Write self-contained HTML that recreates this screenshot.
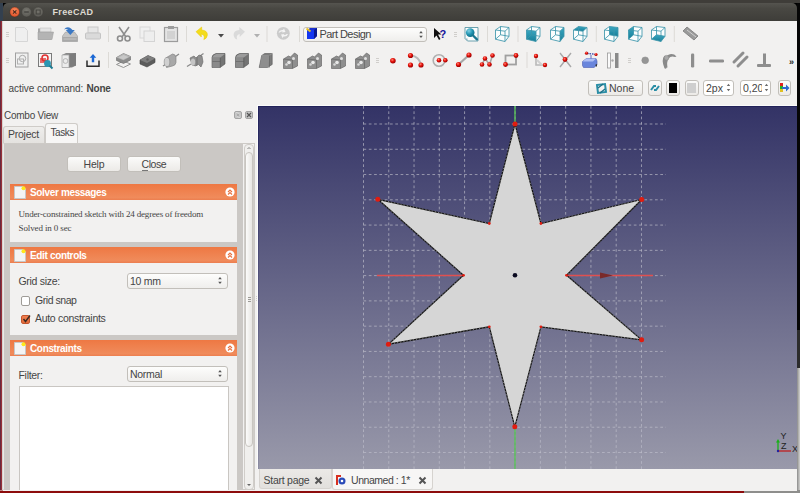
<!DOCTYPE html>
<html><head><meta charset="utf-8">
<style>
*{margin:0;padding:0;box-sizing:border-box}
html,body{width:800px;height:493px;overflow:hidden;background:#000;font-family:"Liberation Sans",sans-serif;color:#3c3c3c}
.a{position:absolute}
.t{position:absolute;white-space:nowrap;font-family:"Liberation Sans",sans-serif}
#title{left:3px;top:3px;width:794px;height:18px;background:linear-gradient(#55544f,#494843 30%,#3e3d39);border-radius:5px 5px 0 0}
.wb{position:absolute;width:11px;height:11px;border-radius:50%;top:4px}
.btn{position:absolute;border:1px solid #c2bfba;border-radius:3px;background:linear-gradient(#fbfbfa,#eceae7);}
.hdr{position:absolute;left:10px;width:227px;height:16px;background:linear-gradient(#ee7843,#f08b5b 85%,#ec7e4f)}
.hdr .tt{position:absolute;left:20px;top:3px;font:bold 10px "Liberation Sans";letter-spacing:-.35px;color:#fff;white-space:nowrap}
.body{position:absolute;left:10px;width:227px;background:#f2f1f0}
.combo{position:absolute;border:1px solid #c2bfba;border-radius:3px;background:linear-gradient(#fdfdfc,#efeeec)}
</style></head><body>
<!-- desktop edges -->
<div class="a" style="left:0;top:0;width:800px;height:3px;background:#3f3d39"></div>
<div class="a" style="left:0;top:3px;width:3px;height:18px;background:#33404f"></div>
<div class="a" style="left:0;top:21px;width:1px;height:472px;background:#682a40"></div><div class="a" style="left:1px;top:21px;width:1px;height:472px;background:#983038"></div><div class="a" style="left:2px;top:21px;width:1px;height:469px;background:#d6d4d1"></div>
<div class="a" style="left:797px;top:3px;width:3px;height:327px;background:#060606"></div>
<div class="a" style="left:797px;top:330px;width:3px;height:38px;background:#2c2c2c"></div>
<div class="a" style="left:797px;top:368px;width:3px;height:125px;background:linear-gradient(90deg,#8a8a8a,#b8b8b6 60%,#d0d0ce)"></div>
<div class="a" style="left:0;top:490px;width:744px;height:1px;background:#c08a88"></div><div class="a" style="left:0;top:491px;width:744px;height:2px;background:#8d0c0c"></div><div class="a" style="left:744px;top:490px;width:56px;height:3px;background:#8e8e8c"></div>
<!-- title -->
<div id="title" class="a">
  <svg class="a" style="left:0;top:0" width="50" height="18" viewBox="0 0 50 18">
<defs><radialGradient id="cb" cx="50%" cy="35%" r="65%"><stop offset="0" stop-color="#f98a5c"/><stop offset="1" stop-color="#df4f27"/></radialGradient>
<radialGradient id="gb" cx="50%" cy="35%" r="65%"><stop offset="0" stop-color="#77766f"/><stop offset="1" stop-color="#5a5954"/></radialGradient></defs>
<circle cx="11.7" cy="9" r="4.9" fill="url(#cb)" stroke="#3a2a22" stroke-width=".4"/>
<path d="M10 7.3l3.4 3.4M13.4 7.3l-3.4 3.4" stroke="#4a2a1e" stroke-width="1.1"/>
<circle cx="23.5" cy="9" r="4.9" fill="url(#gb)" stroke="#3c3b37" stroke-width=".4"/>
<path d="M21.2 9h4.6" stroke="#3e3d39" stroke-width="1.2"/>
<circle cx="35.2" cy="9" r="4.9" fill="url(#gb)" stroke="#3c3b37" stroke-width=".4"/>
<rect x="33.2" y="7" width="4" height="4" fill="none" stroke="#43423e" stroke-width="1"/>
</svg>
  <div class="t" style="left:49.5px;top:4px;font:bold 9px 'Liberation Sans';letter-spacing:.35px;color:#dfdbd2">FreeCAD</div>
</div>
<!-- window -->
<div class="a" style="left:3px;top:21px;width:794px;height:469.5px;background:#f2f1f0"></div>
<svg class="a" style="left:0;top:0" width="800" height="106" viewBox="0 0 800 106">
<defs><radialGradient id="rd" cx="40%" cy="35%" r="60%"><stop offset="0" stop-color="#ff8a7a"/><stop offset=".5" stop-color="#e8140c"/><stop offset="1" stop-color="#a00000"/></radialGradient><linearGradient id="cube" x1="0" y1="0" x2="0" y2="1"><stop offset="0" stop-color="#3aa7c2"/><stop offset="1" stop-color="#177f98"/></linearGradient><linearGradient id="gbox" x1="0" y1="0" x2="0" y2="1"><stop offset="0" stop-color="#8a8a8a"/><stop offset="1" stop-color="#5d5d5d"/></linearGradient></defs>
<rect x="6" y="32" width="3" height="1" fill="#d0cecb"/>
<rect x="6" y="34" width="3" height="1" fill="#d0cecb"/>
<rect x="6" y="36" width="3" height="1" fill="#d0cecb"/>
<rect x="6" y="58" width="3" height="1" fill="#d0cecb"/>
<rect x="6" y="60" width="3" height="1" fill="#d0cecb"/>
<rect x="6" y="62" width="3" height="1" fill="#d0cecb"/>
<rect x="454" y="32" width="3" height="1" fill="#d0cecb"/>
<rect x="454" y="34" width="3" height="1" fill="#d0cecb"/>
<rect x="454" y="36" width="3" height="1" fill="#d0cecb"/>
<rect x="376" y="58" width="3" height="1" fill="#d0cecb"/>
<rect x="376" y="60" width="3" height="1" fill="#d0cecb"/>
<rect x="376" y="62" width="3" height="1" fill="#d0cecb"/>
<rect x="628" y="58" width="3" height="1" fill="#d0cecb"/>
<rect x="628" y="60" width="3" height="1" fill="#d0cecb"/>
<rect x="628" y="62" width="3" height="1" fill="#d0cecb"/>
<rect x="108.0" y="26" width="1" height="16" fill="#dcdad6"/>
<rect x="186.0" y="26" width="1" height="16" fill="#dcdad6"/>
<rect x="266.5" y="26" width="1" height="16" fill="#dcdad6"/>
<rect x="299.0" y="26" width="1" height="16" fill="#dcdad6"/>
<rect x="487.0" y="26" width="1" height="16" fill="#dcdad6"/>
<rect x="517.5" y="26" width="1" height="16" fill="#dcdad6"/>
<rect x="595.8" y="26" width="1" height="16" fill="#dcdad6"/>
<rect x="673.8" y="26" width="1" height="16" fill="#dcdad6"/>
<rect x="108.0" y="52" width="1" height="16" fill="#dcdad6"/>
<rect x="526.5" y="52" width="1" height="16" fill="#dcdad6"/>
<path d="M15.5 27.5h9l3 3v11h-12z" fill="#efefef" stroke="#d6d6d6"/>
<path d="M38 28.5h5l1 1h7v10h-13z" fill="#a8a8a8"/><path d="M40 28h11v4h-11z" fill="#e4e4e4" stroke="#bbb" stroke-width=".5"/><path d="M38 32h15.5l-1.5 7.5h-14z" fill="#b4b4b4" stroke="#9a9a9a" stroke-width=".5"/>
<path d="M62.5 36l3-4h9l3 4v5.5h-15z" fill="#c4c4c4" stroke="#9a9a9a" stroke-width=".6"/><rect x="62.5" y="37" width="15" height="4.5" fill="#a8a8a8"/><path d="M63.5 39h13" stroke="#d8d8d8" stroke-width=".6"/><path d="M64 29.5q3-4 7-1l1.5 1.5h2.3l-4.5 5-4.5-5h2.3q-2-1.5-4.1-.5z" fill="#3b78c4"/>
<rect x="88" y="27" width="10" height="6" fill="#e6e6e6" stroke="#c8c8c8"/><rect x="85.5" y="33" width="15" height="6" rx="1" fill="#dadada" stroke="#c4c4c4"/>
<g stroke="#8d8d8d" stroke-width="1.6" fill="none"><path d="M119 27l7 10M129 27l-7 10"/><circle cx="120" cy="38.5" r="2.5"/><circle cx="127.5" cy="38.5" r="2.5"/></g>
<rect x="140" y="27" width="10" height="11" fill="#f0f0f0" stroke="#d8d8d8"/><rect x="144" y="31" width="10.5" height="10.5" fill="#eeeeee" stroke="#d4d4d4"/>
<rect x="164.5" y="27.5" width="13" height="14" fill="#e4e4e4" stroke="#9c9c9c" stroke-width="1.2"/><rect x="168" y="26" width="6" height="3" fill="#9c9c9c"/><rect x="167" y="31" width="8" height="8" fill="#d2d2d2"/>
<path d="M196 31.7L201.7 27V30Q207.5 30.5 207.4 35Q207 38.5 203.8 39.6Q205.5 35 201.3 34V37Z" fill="#f3dc1c" stroke="#e8c800" stroke-width=".5"/>
<path d="M218 34h6l-3 3.5z" fill="#4a4a4a"/>
<path d="M245 31.7L239.3 27V30Q233.5 30.5 233.6 35Q234 38.5 237.2 39.6Q235.5 35 239.7 34V37Z" fill="#dadada"/>
<path d="M254 34h6l-3 3.5z" fill="#b0b0b0"/>
<circle cx="283.3" cy="33.3" r="6.4" fill="#cbcbcb"/><path d="M278.5 32.5q1-3 4.5-2.5l1 -1.5 1.5 3.5-3.5.5 .8-1q-2-.3-3 1zM288 34q-1 3-4.5 2.5l-1 1.5-1.5-3.5 3.5-.5-.8 1q2 .3 3-1z" fill="#f4f4f4"/>
<path d="M434 28v10l2.5-2.5 2.5 4.5 1.5-1-2.5-4.5h3.5z" fill="#111"/><text x="439.5" y="37.5" font-family="Liberation Sans" font-weight="bold" font-size="11" fill="#14149a">?</text>
<path d="M465 27.5h13v13.5h-10.5l-2.5-2.5z" fill="#fafcfc" stroke="#5b97a6" stroke-width=".9"/><path d="M465 38.5l2.5 2.5v-2.5z" fill="#8ab4c0"/><radialGradient id="lens" cx="35%" cy="30%" r="70%"><stop offset="0" stop-color="#7fd0e4"/><stop offset=".6" stop-color="#1f93b0"/><stop offset="1" stop-color="#12708a"/></radialGradient><circle cx="470.2" cy="32.6" r="4.3" fill="url(#lens)"/><path d="M473.3 35.8l3.6 3.6" stroke="#1a7890" stroke-width="2.3" stroke-linecap="round"/>
<g transform="translate(495,26)">
<path d="M0.5 4 L5.5 .5 L14 1.5 L14 10.3 L10 15.5 L0.5 13.2Z" fill="#fbfdfd"/>
<path d="M0.5 4 L10 5.2 L10 15.5 L0.5 13.2ZM5.5 0.5 L14 1.5 L14 10.3 L5.5 8.8ZM0.5 4 L5.5 0.5M10 5.2 L14 1.5M10 15.5 L14 10.3M0.5 13.2 L5.5 8.8" fill="none" stroke="#3d96ab" stroke-width=".85" stroke-linejoin="round"/>
</g>
<g transform="translate(526,26)">
<path d="M0.5 4 L5.5 .5 L14 1.5 L14 10.3 L10 15.5 L0.5 13.2Z" fill="#fbfdfd"/>
<path d="M0.5 4 L10 5.2 L10 15.5 L0.5 13.2Z" fill="url(#cube)"/>
<path d="M0.5 4 L10 5.2 L10 15.5 L0.5 13.2ZM5.5 0.5 L14 1.5 L14 10.3 L5.5 8.8ZM0.5 4 L5.5 0.5M10 5.2 L14 1.5M10 15.5 L14 10.3M0.5 13.2 L5.5 8.8" fill="none" stroke="#3d96ab" stroke-width=".85" stroke-linejoin="round"/>
</g>
<g transform="translate(550,26)">
<path d="M0.5 4 L5.5 .5 L14 1.5 L14 10.3 L10 15.5 L0.5 13.2Z" fill="#fbfdfd"/>
<path d="M10 5.2 L14 1.5 L14 10.3 L10 15.5Z" fill="url(#cube)"/>
<path d="M0.5 4 L10 5.2 L10 15.5 L0.5 13.2ZM5.5 0.5 L14 1.5 L14 10.3 L5.5 8.8ZM0.5 4 L5.5 0.5M10 5.2 L14 1.5M10 15.5 L14 10.3M0.5 13.2 L5.5 8.8" fill="none" stroke="#3d96ab" stroke-width=".85" stroke-linejoin="round"/>
</g>
<g transform="translate(573,26)">
<path d="M0.5 4 L5.5 .5 L14 1.5 L14 10.3 L10 15.5 L0.5 13.2Z" fill="#fbfdfd"/>
<path d="M0.5 4 L5.5 0.5 L14 1.5 L10 5.2Z" fill="url(#cube)"/>
<path d="M0.5 4 L10 5.2 L10 15.5 L0.5 13.2ZM5.5 0.5 L14 1.5 L14 10.3 L5.5 8.8ZM0.5 4 L5.5 0.5M10 5.2 L14 1.5M10 15.5 L14 10.3M0.5 13.2 L5.5 8.8" fill="none" stroke="#3d96ab" stroke-width=".85" stroke-linejoin="round"/>
</g>
<g transform="translate(604,26)">
<path d="M0.5 4 L5.5 .5 L14 1.5 L14 10.3 L10 15.5 L0.5 13.2Z" fill="#fbfdfd"/>
<path d="M5.5 0.5 L14 1.5 L14 10.3 L5.5 8.8Z" fill="url(#cube)"/>
<path d="M0.5 4 L10 5.2 L10 15.5 L0.5 13.2ZM5.5 0.5 L14 1.5 L14 10.3 L5.5 8.8ZM0.5 4 L5.5 0.5M10 5.2 L14 1.5M10 15.5 L14 10.3M0.5 13.2 L5.5 8.8" fill="none" stroke="#3d96ab" stroke-width=".85" stroke-linejoin="round"/>
</g>
<g transform="translate(628,26)">
<path d="M0.5 4 L5.5 .5 L14 1.5 L14 10.3 L10 15.5 L0.5 13.2Z" fill="#fbfdfd"/>
<path d="M0.5 4 L5.5 0.5 L5.5 8.8 L0.5 13.2Z" fill="url(#cube)"/>
<path d="M0.5 4 L10 5.2 L10 15.5 L0.5 13.2ZM5.5 0.5 L14 1.5 L14 10.3 L5.5 8.8ZM0.5 4 L5.5 0.5M10 5.2 L14 1.5M10 15.5 L14 10.3M0.5 13.2 L5.5 8.8" fill="none" stroke="#3d96ab" stroke-width=".85" stroke-linejoin="round"/>
</g>
<g transform="translate(651,26)">
<path d="M0.5 4 L5.5 .5 L14 1.5 L14 10.3 L10 15.5 L0.5 13.2Z" fill="#fbfdfd"/>
<path d="M0.5 13.2 L5.5 8.8 L14 10.3 L10 15.5Z" fill="url(#cube)"/>
<path d="M0.5 4 L10 5.2 L10 15.5 L0.5 13.2ZM5.5 0.5 L14 1.5 L14 10.3 L5.5 8.8ZM0.5 4 L5.5 0.5M10 5.2 L14 1.5M10 15.5 L14 10.3M0.5 13.2 L5.5 8.8" fill="none" stroke="#3d96ab" stroke-width=".85" stroke-linejoin="round"/>
</g>
<path d="M683 31l4-4 11 9-4 4z" fill="#9a9a9a" stroke="#7a7a7a" stroke-width=".8"/><path d="M687 30l9 7" stroke="#cfcfcf" stroke-width="1"/>
<rect x="15.5" y="53" width="12.5" height="14" fill="#f0f0f0" stroke="#a0a0a0"/><circle cx="22.5" cy="58.5" r="3.2" fill="none" stroke="#a8a8a8"/><rect x="17.5" y="59" width="6" height="5" fill="none" stroke="#b0b0b0"/>
<rect x="38.5" y="53.5" width="13" height="13" fill="#f4f4f4" stroke="#7a7a7a"/><path d="M40 58h6v5h-6z" fill="#e86a6a"/><circle cx="45" cy="58" r="3" fill="none" stroke="#e03030" stroke-width="1.5"/><circle cx="47.5" cy="63.5" r="3.4" fill="#2b97b3"/><path d="M49.5 65.5l3 3" stroke="#1e7c93" stroke-width="2"/>
<path d="M62 55l4-2h10v12.5l-4 2h-10z" fill="#8a8a8a"/><path d="M69 54.5l7-1.5v12.5l-7 2z" fill="#7c7c7c"/><path d="M62 55h7v12.5h-7z" fill="#ececec" stroke="#a4a4a4" stroke-width=".7"/><circle cx="65.5" cy="61" r="2.4" fill="none" stroke="#a8a8a8" stroke-width=".8"/>
<path d="M87 60.5v5.8h12v-5.8" fill="none" stroke="#2a2a2a" stroke-width="1.5"/><path d="M93 54l-3.3 3.8h2.1v4.5h2.4v-4.5h2.1z" fill="#1c68d4"/>
<path d="M116.5 64.5l7-3.5 7 3-7 3.5z" fill="none" stroke="#8a8a8a" stroke-width=".9"/>
<path d="M116.5 57.5l7-4 7 3v3.5l-7 3.5-7-3z" fill="#8c8c8c" stroke="#6a6a6a" stroke-width=".6"/><path d="M116.5 57.5l7-4 7 3-7 3.8z" fill="#b4b4b4"/><path d="M118.5 57.5l5-2.6 4.8 2-5 2.6z" fill="#c8c8c8"/>
<path d="M140 60l8-4.5 7 3v4l-8 4.5-7-3z" fill="#5c5c5c" stroke="#454545" stroke-width=".6"/><path d="M140 60l8-4.5 7 3-8 4.5z" fill="#7e7e7e"/><circle cx="147.5" cy="59.5" r="1.2" fill="#606060"/>
<path d="M163 66l4-2.5M175.5 56.5l3.5-2.5" stroke="#8a8a8a" stroke-width="1.3"/>
<path d="M166.5 57.5l6-3.5q3 0 3.5 3.5v5q-.5 3-3.5 3.5l-6 1.5z" fill="#a8a8a8" stroke="#7a7a7a" stroke-width=".6"/><ellipse cx="167" cy="62" rx="2.8" ry="4.6" fill="#d0d0d0" stroke="#8a8a8a" stroke-width=".6"/>
<path d="M187 66.5l4-2.5M200 56l3.5-2.5" stroke="#8a8a8a" stroke-width="1.3"/>
<path d="M190 58l4-2 2 2 3-3 3 1 1 6-2 5-3-3-2 2-4-1z" fill="#8e8e8e" stroke="#666" stroke-width=".6"/><ellipse cx="193" cy="62" rx="2.2" ry="3.5" fill="#c4c4c4"/><path d="M197 57v9" stroke="#6a6a6a" stroke-width=".8"/>
<g transform="translate(211.5,53.5)"><path d="M.5 4q0-3 4-4h9v10.5l-5 3.5h-8z" fill="#747474" stroke="#505050" stroke-width=".6"/><path d="M.8 4h8v10h-8z" fill="#8a8a8a"/><path d="M.8 8h8" stroke="#6a6a6a" stroke-width=".8"/><path d="M8.8 4v10" stroke="#555" stroke-width=".7"/><path d="M.8 4q1-3 4-3.5h8.5l-4.5 3.5z" fill="#9c9c9c"/></g>
<g transform="translate(235,53.5)"><path d="M.5 4q0-3 4-4h9v10.5l-5 3.5h-8z" fill="#747474" stroke="#505050" stroke-width=".6"/><path d="M.8 4h8v10h-8z" fill="#8a8a8a"/><path d="M.8 8h8" stroke="#6a6a6a" stroke-width=".8"/><path d="M8.8 4v10" stroke="#555" stroke-width=".7"/><path d="M.8 4q1-3 4-3.5h8.5l-4.5 3.5z" fill="#9c9c9c"/></g>
<g transform="translate(259.2,53.5)"><path d="M2.5 2l3-2h7.5v11l-5 3h-8z" fill="#7c7c7c" stroke="#555" stroke-width=".6"/><path d="M2.5 2h7.5l3-2" fill="none" stroke="#999" stroke-width=".8"/><path d="M10 2v12" stroke="#5e5e5e" stroke-width=".8"/><path d="M2.5 2h7.5l-.5 12h-9z" fill="#8e8e8e"/></g>
<g transform="translate(283,53)"><path d="M.5 6l5-3 2 1 4-4 3 2v11l-5 2.5h-9z" fill="#8e8e8e" stroke="#5c5c5c" stroke-width=".6"/><path d="M.5 6l9 1v8.5" fill="none" stroke="#666" stroke-width=".7"/><circle cx="6" cy="9.5" r="1.8" fill="#e8e8e8"/><circle cx="10.5" cy="5.5" r="1.5" fill="#e0e0e0"/><circle cx="3.5" cy="11.5" r="1.3" fill="#d8d8d8"/></g>
<g transform="translate(307,53)"><path d="M.5 6l5-3 2 1 4-4 3 2v11l-5 2.5h-9z" fill="#8e8e8e" stroke="#5c5c5c" stroke-width=".6"/><path d="M.5 6l9 1v8.5" fill="none" stroke="#666" stroke-width=".7"/><circle cx="6" cy="9.5" r="1.8" fill="#e8e8e8"/><circle cx="10.5" cy="5.5" r="1.5" fill="#e0e0e0"/><circle cx="3.5" cy="11.5" r="1.3" fill="#d8d8d8"/></g>
<g transform="translate(331,53)"><path d="M.5 6l5-3 2 1 4-4 3 2v11l-5 2.5h-9z" fill="#8e8e8e" stroke="#5c5c5c" stroke-width=".6"/><path d="M.5 6l9 1v8.5" fill="none" stroke="#666" stroke-width=".7"/><circle cx="6" cy="9.5" r="1.8" fill="#e8e8e8"/><circle cx="10.5" cy="5.5" r="1.5" fill="#e0e0e0"/><circle cx="3.5" cy="11.5" r="1.3" fill="#d8d8d8"/></g>
<g transform="translate(355,53)"><path d="M.5 6l5-3 2 1 4-4 3 2v11l-5 2.5h-9z" fill="#8e8e8e" stroke="#5c5c5c" stroke-width=".6"/><path d="M.5 6l9 1v8.5" fill="none" stroke="#666" stroke-width=".7"/><circle cx="6" cy="9.5" r="1.8" fill="#e8e8e8"/><circle cx="10.5" cy="5.5" r="1.5" fill="#e0e0e0"/><circle cx="3.5" cy="11.5" r="1.3" fill="#d8d8d8"/></g>
<circle cx="392.9" cy="60.75" r="2.8" fill="url(#rd)"/>
<path d="M411 55.5q8 1 10 9" fill="none" stroke="#b8b8b8" stroke-width="2"/>
<circle cx="410.5" cy="55.5" r="2.6" fill="url(#rd)"/>
<circle cx="410.5" cy="65" r="2.6" fill="url(#rd)"/>
<circle cx="421" cy="65" r="2.6" fill="url(#rd)"/>
<circle cx="439" cy="60.5" r="5.8" fill="none" stroke="#b0b0b0" stroke-width="1.6"/>
<circle cx="439" cy="60.3" r="2.3" fill="url(#rd)"/>
<circle cx="445.3" cy="60.3" r="2.3" fill="url(#rd)"/>
<path d="M458.5 64.5L469 55" stroke="#a8a8a8" stroke-width="2.2"/>
<circle cx="458.5" cy="64.5" r="2.6" fill="url(#rd)"/>
<circle cx="469" cy="55" r="2.6" fill="url(#rd)"/>
<path d="M482 64.5L485 58.5 489.5 64.5 492.5 55.5" fill="none" stroke="#a8a8a8" stroke-width="1.6"/>
<circle cx="482" cy="64.5" r="2.3" fill="url(#rd)"/>
<circle cx="485" cy="58.5" r="2.3" fill="url(#rd)"/>
<circle cx="489.5" cy="64.5" r="2.3" fill="url(#rd)"/>
<circle cx="492.5" cy="55.5" r="2.3" fill="url(#rd)"/>
<rect x="505.5" y="55.5" width="10.5" height="9" fill="none" stroke="#a0a0a0" stroke-width="1.8"/>
<circle cx="505.5" cy="64.5" r="2.4" fill="url(#rd)"/>
<circle cx="516" cy="55.5" r="2.4" fill="url(#rd)"/>
<path d="M536 56v9h9" fill="none" stroke="#b8b8b8" stroke-width="1.6"/><path d="M537 60l5 5" stroke="#d0d0d0" stroke-width="2"/>
<circle cx="536" cy="56" r="2.2" fill="url(#rd)"/>
<circle cx="545" cy="65" r="2.2" fill="url(#rd)"/>
<path d="M560 53l11 14M571 53l-11 14" stroke="#a8a8a8" stroke-width="1.4"/>
<circle cx="565" cy="59.5" r="2.4" fill="url(#rd)"/>
<path d="M582.5 61.5l4-3h9.5l1 2.5v4l-3 2.5h-10.5l-1-2z" fill="#6a86dc" stroke="#4a5cb0" stroke-width=".6"/><path d="M582.5 61.5l4-3h9.5l-3 3z" fill="#b0c0f4"/><path d="M587 53.3l8 1" stroke="#3040a8" stroke-width="1.3" stroke-dasharray="1.6 .9"/><path d="M591 55v3.5" stroke="#3848a8" stroke-width=".8"/><path d="M595 65l2-1v3z" fill="#333"/>
<circle cx="586.5" cy="53.2" r="1.6" fill="url(#rd)"/>
<circle cx="596" cy="54.5" r="1.6" fill="url(#rd)"/>
<rect x="607.5" y="53" width="3" height="15" fill="#fafafa" stroke="#9a9a9a" stroke-width=".8"/><rect x="615" y="53" width="3.5" height="15" fill="#8a8a8a"/><circle cx="612.5" cy="60.5" r="1.2" fill="#aaa"/>
<circle cx="645.2" cy="60.3" r="3.4" fill="#959595" stroke="#8a8a8a" stroke-width=".5"/>
<path d="M665.5 67.5Q662 58 668 55Q673 52.5 676.5 56.5L675 57Q671 55.5 668.5 58.5Q666.5 62 667.5 67.5Z" fill="#8a8a8a"/><path d="M665.5 67.5Q662.5 60 665 57" stroke="#8a8a8a" stroke-width="2.4" fill="none" stroke-linecap="round"/><circle cx="666.5" cy="57.8" r="2.4" fill="#a8a8a8" stroke="#8a8a8a" stroke-width=".6"/>
<rect x="691" y="53.5" width="3.2" height="14" rx="1.2" fill="#8e8e8e"/>
<rect x="709" y="59.5" width="15" height="3" rx="1.2" fill="#8e8e8e"/>
<path d="M734 62l9-9M738 66l9-9" stroke="#8e8e8e" stroke-width="3" stroke-linecap="round"/>
<rect x="763" y="53.5" width="3" height="12" fill="#8e8e8e"/><rect x="757" y="64" width="14" height="3" rx="1" fill="#8e8e8e"/>
<text x="789" y="64.5" font-family="Liberation Sans" font-weight="bold" font-size="9" fill="#222">»</text>
</svg><svg class="a" style="left:258px;top:106px" width="539" height="363" viewBox="258 106 539 363">
<defs><linearGradient id="vbg" x1="0" y1="0" x2="0" y2="1"><stop offset="0" stop-color="#333366"/><stop offset="1" stop-color="#9999aa"/></linearGradient></defs>
<rect x="258" y="106" width="539" height="363" fill="url(#vbg)"/>
<linearGradient id="lb" x1="0" y1="0" x2="0" y2="1"><stop offset="0" stop-color="#20205a"/><stop offset="1" stop-color="#8c8ca2"/></linearGradient><rect x="258" y="106" width="1" height="363" fill="url(#lb)"/><rect x="258" y="106" width="539" height="1" fill="#22225a"/>
<path d="M363.50 106V469 M388.77 106V469 M414.04 106V469 M439.31 106V469 M464.58 106V469 M489.85 106V469 M515.12 106V469 M540.39 106V469 M565.66 106V469 M590.93 106V469 M616.20 106V469 M641.47 106V469 M363.5 124.00H666 M363.5 149.27H666 M363.5 174.54H666 M363.5 199.81H666 M363.5 225.08H666 M363.5 250.35H666 M363.5 275.62H666 M363.5 300.89H666 M363.5 326.16H666 M363.5 351.43H666 M363.5 376.70H666 M363.5 401.97H666 M363.5 427.24H666 M363.5 452.51H666" stroke="#bcbcca" stroke-width="1" stroke-dasharray="2.7 2.6" fill="none" opacity=".68"/>
<path d="M515 106V469" stroke="#56c056" stroke-width="1.4"/>
<path d="M377 275.5H653" stroke="#e05050" stroke-width="1.4"/>
<path d="M600 272.5l13 3-13 3z" fill="#7a2a2a"/>
<path d="M515 124 L540.9 223.5 L641.7 199.5 L566.5 275.3 L641.6 339.8 L540.9 326.8 L514.8 426.8 L489.3 326.8 L388.4 344.2 L463.5 275.3 L377.8 199.3 L489.3 223.5Z" fill="#d6d6d6" stroke="#141414" stroke-width="1.2"/>
<path d="M515 124 L540.9 223.5 L641.7 199.5 L566.5 275.3 L641.6 339.8 L540.9 326.8 L514.8 426.8 L489.3 326.8 L388.4 344.2 L463.5 275.3 L377.8 199.3 L489.3 223.5Z" fill="none" stroke="#d8d8d8" stroke-width=".7" stroke-dasharray="1 2.2" opacity=".8"/>
<circle cx="515" cy="124" r="2.5" fill="#e01c10"/>
<circle cx="540.9" cy="223.5" r="1.4" fill="#e01c10"/>
<circle cx="641.7" cy="199.5" r="2.5" fill="#e01c10"/>
<circle cx="566.5" cy="275.3" r="1.4" fill="#e01c10"/>
<circle cx="641.6" cy="339.8" r="2.5" fill="#e01c10"/>
<circle cx="540.9" cy="326.8" r="1.4" fill="#e01c10"/>
<circle cx="514.8" cy="426.8" r="2.5" fill="#e01c10"/>
<circle cx="489.3" cy="326.8" r="1.4" fill="#e01c10"/>
<circle cx="388.4" cy="344.2" r="2.5" fill="#e01c10"/>
<circle cx="463.5" cy="275.3" r="1.4" fill="#e01c10"/>
<circle cx="377.8" cy="199.3" r="2.5" fill="#e01c10"/>
<circle cx="489.3" cy="223.5" r="1.4" fill="#e01c10"/>
<circle cx="515" cy="275.3" r="2.3" fill="#0a0a20"/>
<path d="M778 450.5V442" stroke="#18b018" stroke-width="1.3"/><path d="M776 442.5l2-3.5 2 3.5z" fill="#18b018"/>
<path d="M778.5 451H791" stroke="#c02020" stroke-width="1.3"/>
<circle cx="778" cy="451" r="1.2" fill="#2020a0"/>
<text x="780.5" y="439" font-family="Liberation Sans" font-size="9" fill="#222">Y</text>
<text x="781" y="449" font-family="Liberation Sans" font-size="9" fill="#222">Z</text>
<text x="792" y="452" font-family="Liberation Sans" font-size="9" fill="#222">X</text>
</svg><!-- part design combo -->
<div class="combo" style="left:302.5px;top:26.5px;width:124px;height:15.5px"></div>
<svg class="a" style="left:305px;top:27px" width="13" height="13" viewBox="0 0 13 13"><path d="M2 3l3-2h7v8l-3 3h-7z" fill="#1a2fd0"/><path d="M2 3h7v9h-7z" fill="#1437f0"/><path d="M9 3l3-2v8l-3 3z" fill="#0a1a90"/><path d="M1.5 1.5l4 3" stroke="#e8c020" stroke-width="2"/></svg>
<div class="t" style="left:319.5px;top:27.5px;font-size:11px;color:#454545;letter-spacing:-.55px">Part Design</div>
<svg class="a" style="left:417px;top:29px" width="8" height="11" viewBox="0 0 8 11"><path d="M2.2 4.3l1.8-2.3 1.8 2.3zM2.2 6.7l1.8 2.3 1.8-2.3z" fill="#555"/></svg>

<!-- active command -->
<div class="t" style="left:8.5px;top:82.5px;font-size:10px;letter-spacing:-.05px;color:#454545">active command:</div>
<div class="t" style="left:86.5px;top:82.5px;font:bold 10px 'Liberation Sans';letter-spacing:-.2px;color:#454545">None</div>

<div class="btn" style="left:588px;top:80px;width:55px;height:16px"></div>
<svg class="a" style="left:595px;top:81.5px" width="13" height="13" viewBox="0 0 13 13"><path d="M2 3l8-1 1 8-8 1z" fill="none" stroke="#2a8ea6" stroke-width="2"/><path d="M3 6l5-4M5 11l5-4" stroke="#1c7086" stroke-width="1.3"/></svg>
<div class="t" style="left:609px;top:81.5px;font-size:10.5px;color:#454545">None</div>
<div class="btn" style="left:648px;top:80px;width:13.5px;height:16px"></div>
<svg class="a" style="left:649px;top:82px" width="12" height="12" viewBox="0 0 12 12"><path d="M2 8l3-4h2M10 4l-3 4h-2" fill="none" stroke="#2a8ea6" stroke-width="2"/></svg>
<div class="btn" style="left:666px;top:80px;width:13.5px;height:16px"></div>
<div class="a" style="left:669px;top:83px;width:8px;height:10px;background:#000"></div>
<div class="btn" style="left:684.5px;top:80px;width:14px;height:16px"></div>
<div class="a" style="left:687px;top:83px;width:9px;height:10px;background:#cfcfcf"></div>
<div class="combo" style="left:703px;top:80px;width:30.5px;height:16px;background:#fff"></div>
<div class="t" style="left:706px;top:81.5px;font-size:10.5px;color:#454545">2px</div>
<svg class="a" style="left:725px;top:81px" width="7" height="13" viewBox="0 0 7 13"><path d="M1.8 5l1.7-2.2 1.7 2.2zM1.8 8l1.7 2.2 1.7-2.2z" fill="#6a6a6a"/></svg>
<div class="combo" style="left:740px;top:80px;width:31px;height:16px;background:#fff"></div>
<div class="t" style="left:743px;top:81.5px;font-size:10.5px;color:#454545;width:19px;overflow:hidden">0,20</div>
<svg class="a" style="left:762.5px;top:81px" width="7" height="13" viewBox="0 0 7 13"><path d="M1.8 5l1.7-2.2 1.7 2.2zM1.8 8l1.7 2.2 1.7-2.2z" fill="#6a6a6a"/></svg>
<div class="btn" style="left:777.5px;top:80px;width:13px;height:16px"></div>
<svg class="a" style="left:778px;top:82px" width="12" height="12" viewBox="0 0 12 12"><rect x="2" y="1" width="3" height="3" fill="#e02020"/><rect x="2" y="4" width="3" height="3" fill="#20b020"/><rect x="2" y="7" width="3" height="3" fill="#e0c020"/><path d="M4 5h4v-2.5l3.5 3.5-3.5 3.5v-2.5h-4z" fill="#2a6ad0"/></svg>

<!-- combo view dock -->
<div class="t" style="left:4px;top:109.5px;font-size:10px;letter-spacing:-.25px;color:#454545">Combo View</div>
<div class="a" style="left:234px;top:110.5px;width:8px;height:8px;border:1px solid #a4a4a4;border-radius:2px;background:#c6c6c6"></div>
<div class="a" style="left:245px;top:110.5px;width:8px;height:8px;border:1px solid #a4a4a4;border-radius:2px;background:#c6c6c6"></div>
<svg class="a" style="left:245px;top:110.5px" width="8" height="8" viewBox="0 0 8 8"><path d="M2 2l4 4M6 2l-4 4" stroke="#555" stroke-width="1.2"/></svg>
<svg class="a" style="left:234px;top:110.5px" width="8" height="8" viewBox="0 0 8 8"><path d="M1.8 1.8h2v1M6.2 6.2h-2v-1" stroke="#f2f2f2" stroke-width="1"/><circle cx="4" cy="4" r=".8" fill="#888"/></svg>

<!-- tabs -->
<div class="a" style="left:3px;top:125.5px;width:42px;height:17px;border:1px solid #cfccc8;border-bottom:none;border-radius:3px 3px 0 0;background:linear-gradient(#efeeec,#e4e2df)"></div>
<div class="t" style="left:8px;top:127.5px;font-size:10.5px;letter-spacing:-.25px;color:#454545">Project</div>
<div class="a" style="left:45px;top:123px;width:33px;height:20px;border:1px solid #cfccc8;border-bottom:none;border-radius:3px 3px 0 0;background:#f7f6f5"></div>
<div class="t" style="left:50.5px;top:127px;font-size:10px;letter-spacing:-.4px;color:#454545">Tasks</div>

<!-- tab pane -->
<div class="a" style="left:3px;top:142.5px;width:252px;height:347px;border:1px solid #cdcac6;border-left-color:#ebe9e7;background:#f2f1f0"></div>
<div class="a" style="left:4px;top:143.5px;width:239px;height:346px;background:#cbc8c5"></div>
<!-- scrollbar -->
<div class="a" style="left:243.5px;top:143.5px;width:10.5px;height:346px;background:#f0efed;border:1px solid #d0cdc9;border-radius:4px"></div>
<div class="a" style="left:245px;top:152px;width:7.5px;height:295px;background:linear-gradient(90deg,#fbfbfa,#e8e6e3);border:1px solid #c8c5c0;border-radius:4px"></div>
<svg class="a" style="left:244px;top:144px" width="10" height="8" viewBox="0 0 10 8"><path d="M3.5 5l1.5-1.5 1.5 1.5" fill="none" stroke="#777" stroke-width=".9"/></svg>
<svg class="a" style="left:244px;top:481px" width="10" height="8" viewBox="0 0 10 8"><path d="M3 3h4l-2 2z" fill="#666"/></svg>

<!-- help/close -->
<div class="btn" style="left:66.5px;top:156px;width:54px;height:15.5px"></div>
<div class="t" style="left:83.5px;top:158px;font-size:10.5px;letter-spacing:-.2px;color:#454545">Help</div>
<div class="btn" style="left:126.5px;top:156px;width:54px;height:15.5px"></div>
<div class="t" style="left:141.5px;top:158px;font-size:10.5px;letter-spacing:-.45px;color:#454545">Close</div>
<div class="a" style="left:142px;top:170px;width:6px;height:1px;background:#777"></div>

<!-- solver messages -->
<div class="hdr" style="top:184px"><div class="tt">Solver messages</div></div>
<div class="body" style="top:200px;height:41.5px"></div>
<div class="t" style="left:18.5px;top:209px;font:9px 'Liberation Serif';letter-spacing:-.17px;color:#454545">Under-constrained sketch with 24 degrees of freedom</div>
<div class="t" style="left:18.5px;top:223px;font:9px 'Liberation Serif';letter-spacing:-.12px;color:#454545">Solved in 0 sec</div>

<!-- edit controls -->
<div class="hdr" style="top:246.5px"><div class="tt">Edit controls</div></div>
<div class="body" style="top:262.5px;height:72px"></div>
<div class="t" style="left:18.5px;top:275px;font-size:10.5px;letter-spacing:-.3px;color:#454545">Grid size:</div>
<div class="combo" style="left:126.5px;top:272.5px;width:101px;height:16px"></div>
<div class="t" style="left:130px;top:275px;font-size:10.5px;letter-spacing:-.3px;color:#454545">10 mm</div>
<svg class="a" style="left:216px;top:274px" width="8" height="13" viewBox="0 0 8 13"><path d="M2.2 5.3l1.8-2.3 1.8 2.3zM2.2 7.7l1.8 2.3 1.8-2.3z" fill="#555"/></svg>
<div class="a" style="left:20.5px;top:296px;width:9.5px;height:9.5px;border:1px solid #9f9c97;border-radius:2px;background:#fff"></div>
<div class="t" style="left:35px;top:293.5px;font-size:10.5px;letter-spacing:-.45px;color:#454545">Grid snap</div>
<div class="a" style="left:20.5px;top:314.5px;width:9.5px;height:9.5px;border:1px solid #c4552c;border-radius:2px;background:linear-gradient(#f08050,#e06a3a)"></div>
<svg class="a" style="left:20.5px;top:313px" width="11" height="11" viewBox="0 0 11 11"><path d="M2.5 6l2 2.5 4.5-6" fill="none" stroke="#3a2a22" stroke-width="1.4"/></svg>
<div class="t" style="left:35px;top:312px;font-size:10.5px;letter-spacing:-.3px;color:#454545">Auto constraints</div>

<!-- constraints -->
<div class="hdr" style="top:340px"><div class="tt">Constraints</div></div>
<div class="body" style="top:356px;height:134px"></div>
<div class="t" style="left:18.5px;top:368.5px;font-size:10.5px;letter-spacing:-.3px;color:#454545">Filter:</div>
<div class="combo" style="left:126.5px;top:365.5px;width:101px;height:16px"></div>
<div class="t" style="left:130px;top:368px;font-size:10.5px;letter-spacing:-.3px;color:#454545">Normal</div>
<svg class="a" style="left:216px;top:367px" width="8" height="13" viewBox="0 0 8 13"><path d="M2.2 5.3l1.8-2.3 1.8 2.3zM2.2 7.7l1.8 2.3 1.8-2.3z" fill="#555"/></svg>
<div class="a" style="left:18.5px;top:386px;width:210px;height:104px;background:#fff;border:1px solid #c9c6c2;border-bottom:none"></div>

<!-- bottom tab bar -->
<div class="a" style="left:258px;top:469px;width:539px;height:21px;background:#f2f1f0"></div>
<div class="a" style="left:258.5px;top:469px;width:73px;height:20px;border:1px solid #d6d3cf;border-top:none;border-radius:0 0 3px 3px;background:linear-gradient(#ebe9e6,#e2e0dd)"></div>
<div class="t" style="left:263.5px;top:473.5px;font-size:10.5px;letter-spacing:-.25px;color:#454545">Start page</div>
<svg class="a" style="left:314px;top:476px" width="9" height="9" viewBox="0 0 9 9"><path d="M1.5 1.5l6 6M7.5 1.5l-6 6" stroke="#555" stroke-width="2"/></svg>
<div class="a" style="left:332px;top:469px;width:100.5px;height:21px;border:1px solid #d6d3cf;border-top:none;border-radius:0 0 3px 3px;background:#f7f6f5"></div>
<svg class="a" style="left:335px;top:474px" width="12" height="12" viewBox="0 0 12 12"><path d="M1 1h5v2h-3v8h-2z" fill="#d83020"/><circle cx="7" cy="7" r="3.5" fill="#2a4ab8"/><circle cx="7" cy="7" r="1.3" fill="#fff"/></svg>
<div class="t" style="left:351px;top:473.5px;font-size:10.5px;letter-spacing:-.45px;color:#454545">Unnamed : 1*</div>
<svg class="a" style="left:417.5px;top:476px" width="9" height="9" viewBox="0 0 9 9"><path d="M1.5 1.5l6 6M7.5 1.5l-6 6" stroke="#555" stroke-width="2"/></svg>
<div class="a" style="left:248px;top:297px;width:2.5px;height:1px;background:#9c9a96"></div>
<div class="a" style="left:248px;top:299px;width:2.5px;height:1px;background:#9c9a96"></div>
<div class="a" style="left:248px;top:301px;width:2.5px;height:1px;background:#9c9a96"></div>
<div class="a" style="left:255.5px;top:296px;width:2px;height:1px;background:#d0cecb"></div>
<div class="a" style="left:255.5px;top:298px;width:2px;height:1px;background:#d0cecb"></div>
<div class="a" style="left:255.5px;top:300px;width:2px;height:1px;background:#d0cecb"></div>
<div class="a" style="left:257px;top:105px;width:1px;height:364px;background:#fbfbfa"></div><div class="a" style="left:257px;top:105px;width:540px;height:1px;background:#fbfbfa"></div>
<svg class="a" style="left:14px;top:186px" width="12" height="13" viewBox="0 0 12 13"><path d="M.5 .5h8.5l2.5 2.5v9.5h-11z" fill="#f4f4f4" stroke="#c8c8c8"/><circle cx="9.5" cy="2.2" r="2" fill="#ffe81a"/></svg><svg class="a" style="left:224.5px;top:187px" width="10" height="10" viewBox="0 0 10 10"><circle cx="5" cy="5" r="4.6" fill="#fff"/><path d="M3 5l2-2 2 2M3 7.5l2-2 2 2" fill="none" stroke="#e8703e" stroke-width="1.1"/></svg><svg class="a" style="left:14px;top:248.5px" width="12" height="13" viewBox="0 0 12 13"><path d="M.5 .5h8.5l2.5 2.5v9.5h-11z" fill="#f4f4f4" stroke="#c8c8c8"/><circle cx="9.5" cy="2.2" r="2" fill="#ffe81a"/></svg><svg class="a" style="left:224.5px;top:249.5px" width="10" height="10" viewBox="0 0 10 10"><circle cx="5" cy="5" r="4.6" fill="#fff"/><path d="M3 5l2-2 2 2M3 7.5l2-2 2 2" fill="none" stroke="#e8703e" stroke-width="1.1"/></svg><svg class="a" style="left:14px;top:342px" width="12" height="13" viewBox="0 0 12 13"><path d="M.5 .5h8.5l2.5 2.5v9.5h-11z" fill="#f4f4f4" stroke="#c8c8c8"/><circle cx="9.5" cy="2.2" r="2" fill="#ffe81a"/></svg><svg class="a" style="left:224.5px;top:343px" width="10" height="10" viewBox="0 0 10 10"><circle cx="5" cy="5" r="4.6" fill="#fff"/><path d="M3 5l2-2 2 2M3 7.5l2-2 2 2" fill="none" stroke="#e8703e" stroke-width="1.1"/></svg>
</body></html>
